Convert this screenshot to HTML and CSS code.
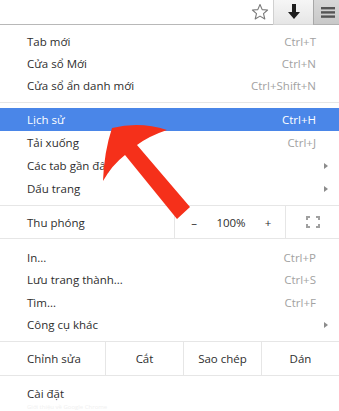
FILE: index.html
```html
<!DOCTYPE html>
<html lang="vi">
<head>
  <meta charset="UTF-8">
  <title>Menu Chrome</title>
  <link rel="stylesheet" href="styles.css">
</head>
<body>

  <div class="toolbar">
    <div class="omnibox-end">
      <svg class="star" width="18" height="18" viewBox="0 0 18 18">
        <polygon points="9,1.5 11.2,6.6 16.6,7 12.5,10.6 13.8,16 9,13.1 4.2,16 5.5,10.6 1.4,7 6.8,6.6" fill="#fff" stroke="#7a7a7a" stroke-width="1.1" stroke-linejoin="round"/>
      </svg>
    </div>
    <div class="tb-btn download">
      <svg width="14" height="16" viewBox="0 0 14 16">
        <rect x="5" y="0" width="4" height="9" fill="#1e1e1e"/>
        <polygon points="1,8 13,8 7,15" fill="#1e1e1e"/>
      </svg>
    </div>
    <div class="tb-btn menu-btn">
      <svg width="14" height="12" viewBox="0 0 14 12">
        <rect x="0" y="1" width="14" height="2.4" fill="#555"/>
        <rect x="0" y="5.2" width="14" height="2.4" fill="#555"/>
        <rect x="0" y="9.4" width="14" height="2.4" fill="#555"/>
      </svg>
    </div>
  </div>

  <div class="menu">
    <div class="group first">
      <div class="item"><span>Tab mới</span><span class="key">Ctrl+T</span></div>
      <div class="item"><span>Cửa sổ Mới</span><span class="key">Ctrl+N</span></div>
      <div class="item"><span>Cửa sổ ẩn danh mới</span><span class="key">Ctrl+Shift+N</span></div>
    </div>
    <div class="sep top6"></div>

    <div class="group tall">
      <div class="item active"><span>Lịch sử</span><span class="key">Ctrl+H</span></div>
      <div class="item"><span>Tải xuống</span><span class="key">Ctrl+J</span></div>
      <div class="item"><span>Các tab gần đây</span><span class="sub"></span></div>
      <div class="item"><span>Dấu trang</span><span class="sub"></span></div>
    </div>
    <div class="sep top5 flush"></div>

    <div class="zoom-row">
      <div class="label">Thu phóng</div>
      <div class="zoom-ctrl">
        <span>–</span>
        <span>100%</span>
        <span>+</span>
      </div>
      <div class="fullscreen">
        <svg width="14" height="12" viewBox="0 0 14 12" fill="none" stroke="#a0a0a0" stroke-width="2">
          <path d="M1 4V1H4M10 1H13V4M13 8V11H10M4 11H1V8"/>
        </svg>
      </div>
    </div>

    <div class="group third">
      <div class="item half"><span>In...</span><span class="key">Ctrl+P</span></div>
      <div class="item half"><span>Lưu trang thành...</span><span class="key">Ctrl+S</span></div>
      <div class="item half"><span>Tìm...</span><span class="key">Ctrl+F</span></div>
      <div class="item half"><span>Công cụ khác</span><span class="sub"></span></div>
    </div>
    <div class="sep top5 flush"></div>

    <div class="edit-row">
      <div class="label">Chỉnh sửa</div>
      <div class="cell">Cắt</div>
      <div class="cell">Sao chép</div>
      <div class="cell">Dán</div>
    </div>

    <div class="group last">
      <div class="item"><span>Cài đặt</span></div>
      <div class="item faint"><span>Giới thiệu về Google Chrome</span></div>
    </div>
  </div>

  <!-- red arrow pointing at "Lich su" -->
  <svg class="arrow" width="339" height="411" viewBox="0 0 339 411">
    <path d="M112 128 Q140 121 167 130 Q149 136 137 145 L190 207 L177 219 L125 155 Q112 165 103 181 Q104 152 112 128 Z" fill="#f5301a"/>
  </svg>

</body>
</html>
```

FILE: styles.css
```css
body {
  margin: 0;
  width: 339px;
  height: 411px;
  overflow: hidden;
  background: #fff;
  font-family: "Open Sans", "Noto Sans", Arial, sans-serif;
  font-size: 11.5px;
  color: #2e2e2e;
  position: relative;
}

.toolbar {
  display: flex;
  height: 25px;
}

.omnibox-end {
  flex: 1;
  border-bottom: 1px solid #b8b8b8;
  display: flex;
  justify-content: flex-end;
  align-items: center;
  padding-right: 4px;
}

.star {
  margin-top: -1px;
}

.tb-btn {
  display: flex;
  align-items: center;
  justify-content: center;
  box-sizing: border-box;
  height: 25px;
}

.download {
  width: 40px;
  background: linear-gradient(#f6f6f6, #e6e6e6);
  border-left: 1px solid #d0d0d0;
  border-bottom: 1px solid #d6d6d6;
}

.menu-btn {
  width: 26px;
  background: linear-gradient(#d8d8d8, #c8c8c8);
  border-left: 1px solid #a8a8a8;
  border-bottom: 1px solid #b0b0b0;
  padding-left: 2px;
}

.group.first { padding-top: 5px; }
.group.third { padding-top: 7px; }
.group.last { padding-top: 6px; }

.item {
  height: 22px;
  display: flex;
  align-items: center;
  justify-content: space-between;
  padding: 0 23px 0 27px;
}

.group.tall .item { height: 23px; }
.item.half { height: 22.5px; }

.item .key {
  color: #a2a2a2;
}

.item.active {
  background: #4a86e8;
  color: #fff;
}

.item.active .key {
  color: #fff;
}

.item.faint {
  height: 6px;
  font-size: 6px;
  line-height: 6px;
  color: #f0f0f0;
  overflow: hidden;
}

.sub {
  width: 0;
  height: 0;
  border-top: 3.5px solid transparent;
  border-bottom: 3.5px solid transparent;
  border-left: 4px solid #8c8c8c;
  margin-right: -12px;
}

.sep {
  height: 1px;
  background: #e6e6e6;
  margin-bottom: 5px;
}

.sep.top6 { margin-top: 6px; }
.sep.top5 { margin-top: 5px; }
.sep.flush { margin-bottom: 0; }

.zoom-row {
  display: grid;
  grid-template-columns: 174px 112px 1fr;
  height: 32px;
  border-bottom: 1px solid #e6e6e6;
}

.zoom-row .label,
.edit-row .label {
  display: flex;
  align-items: center;
  padding-left: 27px;
}

.zoom-ctrl {
  display: grid;
  grid-template-columns: 38px 36px 38px;
  align-items: center;
  justify-items: center;
  color: #2e2e2e;
  border-left: 1px solid #e6e6e6;
  border-right: 1px solid #e6e6e6;
}

.fullscreen {
  display: flex;
  align-items: center;
  justify-content: center;
  padding-left: 1px;
}

.edit-row {
  display: grid;
  grid-template-columns: 105px 1fr 1fr 1fr;
  height: 33px;
  border-bottom: 1px solid #e6e6e6;
}

.edit-row .cell {
  display: flex;
  align-items: center;
  justify-content: center;
  border-left: 1px solid #e6e6e6;
}

.arrow {
  position: absolute;
  left: 0;
  top: 0;
  pointer-events: none;
}
```
